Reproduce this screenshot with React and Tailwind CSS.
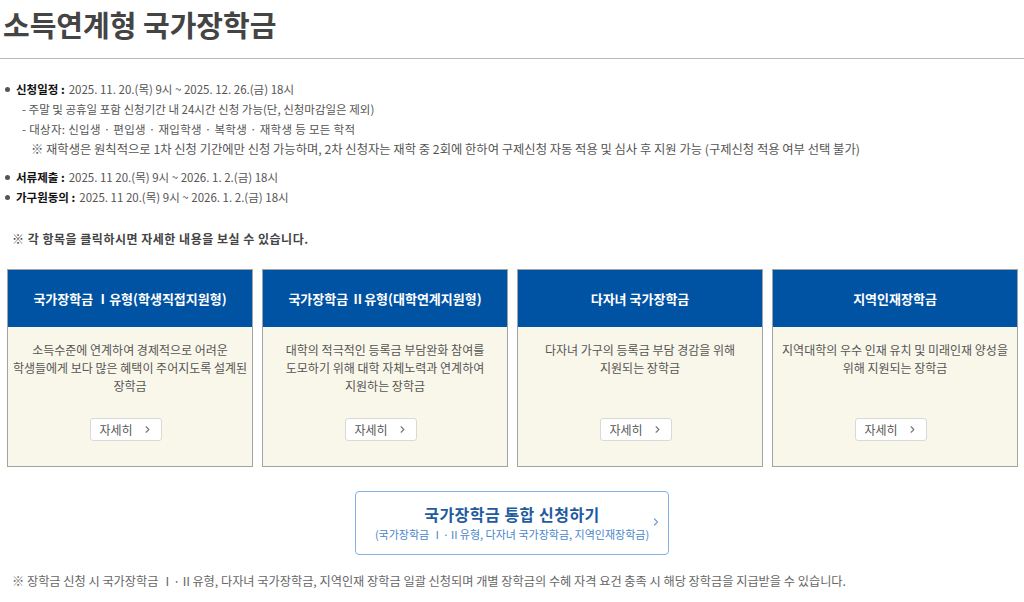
import { ChevronRight } from 'lucide-react';

const font = { fontFamily: '"Noto Sans CJK KR", "Noto Sans", sans-serif' };

const cards = [
  { title: '국가장학금 Ⅰ유형(학생직접지원형)', desc: ['소득수준에 연계하여 경제적으로 어려운', '학생들에게 보다 많은 혜택이 주어지도록 설계된', '장학금'] },
  { title: '국가장학금 Ⅱ유형(대학연계지원형)', desc: ['대학의 적극적인 등록금 부담완화 참여를', '도모하기 위해 대학 자체노력과 연계하여', '지원하는 장학금'] },
  { title: '다자녀 국가장학금', desc: ['다자녀 가구의 등록금 부담 경감을 위해', '지원되는 장학금'] },
  { title: '지역인재장학금', desc: ['지역대학의 우수 인재 유치 및 미래인재 양성을', '위해 지원되는 장학금'] },
];

function Bullet({ label, children }) {
  return (
    <div className="flex items-center h-5">
      <span className="w-[5px] h-[5px] rounded-full bg-[#555] ml-[5px] mr-[6px]" />
      <span className="font-bold text-[#111]">{label} : </span>
      <span className="ml-1">{children}</span>
    </div>
  );
}

export default function App() {
  return (
    <div className="w-[1024px] h-[602px] bg-white overflow-hidden text-[#555]" style={font}>
      <h1 className="text-[29px] font-bold text-[#444] leading-none pl-[3px] pt-[10px] h-[58px]">소득연계형 국가장학금</h1>
      <div className="h-px bg-[#b9b9bf]" />

      <div className="pt-[20px] text-[11.5px] leading-5">
        <Bullet label="신청일정">2025. 11. 20.(목) 9시 ~ 2025. 12. 26.(금) 18시</Bullet>
        <div className="pl-[22px]">- 주말 및 공휴일 포함 신청기간 내 24시간 신청 가능(단, 신청마감일은 제외)</div>
        <div className="pl-[22px] tracking-[0.3px]">- 대상자: 신입생 · 편입생 · 재입학생 · 복학생 · 재학생 등 모든 학적</div>
        <div className="pl-[31px] text-[12.3px]">※ 재학생은 원칙적으로 1차 신청 기간에만 신청 가능하며, 2차 신청자는 재학 중 2회에 한하여 구제신청 자동 적용 및 심사 후 지원 가능 (구제신청 적용 여부 선택 불가)</div>
        <div className="mt-2">
          <Bullet label="서류제출">2025. 11 20.(목) 9시 ~ 2026. 1. 2.(금) 18시</Bullet>
          <Bullet label="가구원동의">2025. 11 20.(목) 9시 ~ 2026. 1. 2.(금) 18시</Bullet>
        </div>
        <div className="mt-[22px] pl-[12px] font-bold text-[#444] text-[12px] tracking-[0.5px]">※ 각 항목을 클릭하시면 자세한 내용을 보실 수 있습니다.</div>
      </div>

      <div className="grid grid-cols-4 gap-[9px] pl-[7px] pr-[6px] mt-[20px]">
        {cards.map((c) => (
          <div key={c.title} className="border border-[#a3a3a3] bg-[#f9f7ea] h-[198px] flex flex-col">
            <div className="bg-[#0052a3] h-[57px] flex items-center justify-center text-white font-bold text-[13px]">{c.title}</div>
            <div className="flex-1 flex flex-col items-center pt-[14px] text-[12px] leading-[18px] text-[#555] text-center">
              {c.desc.map((d) => <div key={d}>{d}</div>)}
              <div className="mt-auto mb-[25px] mr-[8px] w-[72px] h-[23px] bg-white border border-[#d9d9d9] rounded-[3px] flex items-center justify-center gap-[9px] text-[12px] text-[#555]">
                <span>자세히</span>
                <ChevronRight size={11} strokeWidth={2.5} className="text-[#777]" />
              </div>
            </div>
          </div>
        ))}
      </div>

      <div className="flex justify-center mt-[24px]">
        <div className="w-[314px] h-[64px] border border-[#86b2e3] rounded-[4px] flex items-center relative">
          <div className="flex-1 flex flex-col items-center">
            <div className="text-[16px] font-bold text-[#1f5c9e] leading-[21px] tracking-[0.5px]">국가장학금 통합 신청하기</div>
            <div className="text-[11px] text-[#4a86c9] leading-[18px]">(국가장학금 Ⅰ·Ⅱ유형, 다자녀 국가장학금, 지역인재장학금)</div>
          </div>
          <ChevronRight size={12} strokeWidth={2.5} className="text-[#6f9fd6] absolute right-[6px] top-[24px]" />
        </div>
      </div>

      <div className="mt-[17px] pl-[12px] text-[12.2px] text-[#666]">※ 장학금 신청 시 국가장학금 Ⅰ·Ⅱ유형, 다자녀 국가장학금, 지역인재 장학금 일괄 신청되며 개별 장학금의 수혜 자격 요건 충족 시 해당 장학금을 지급받을 수 있습니다.</div>
    </div>
  );
}
